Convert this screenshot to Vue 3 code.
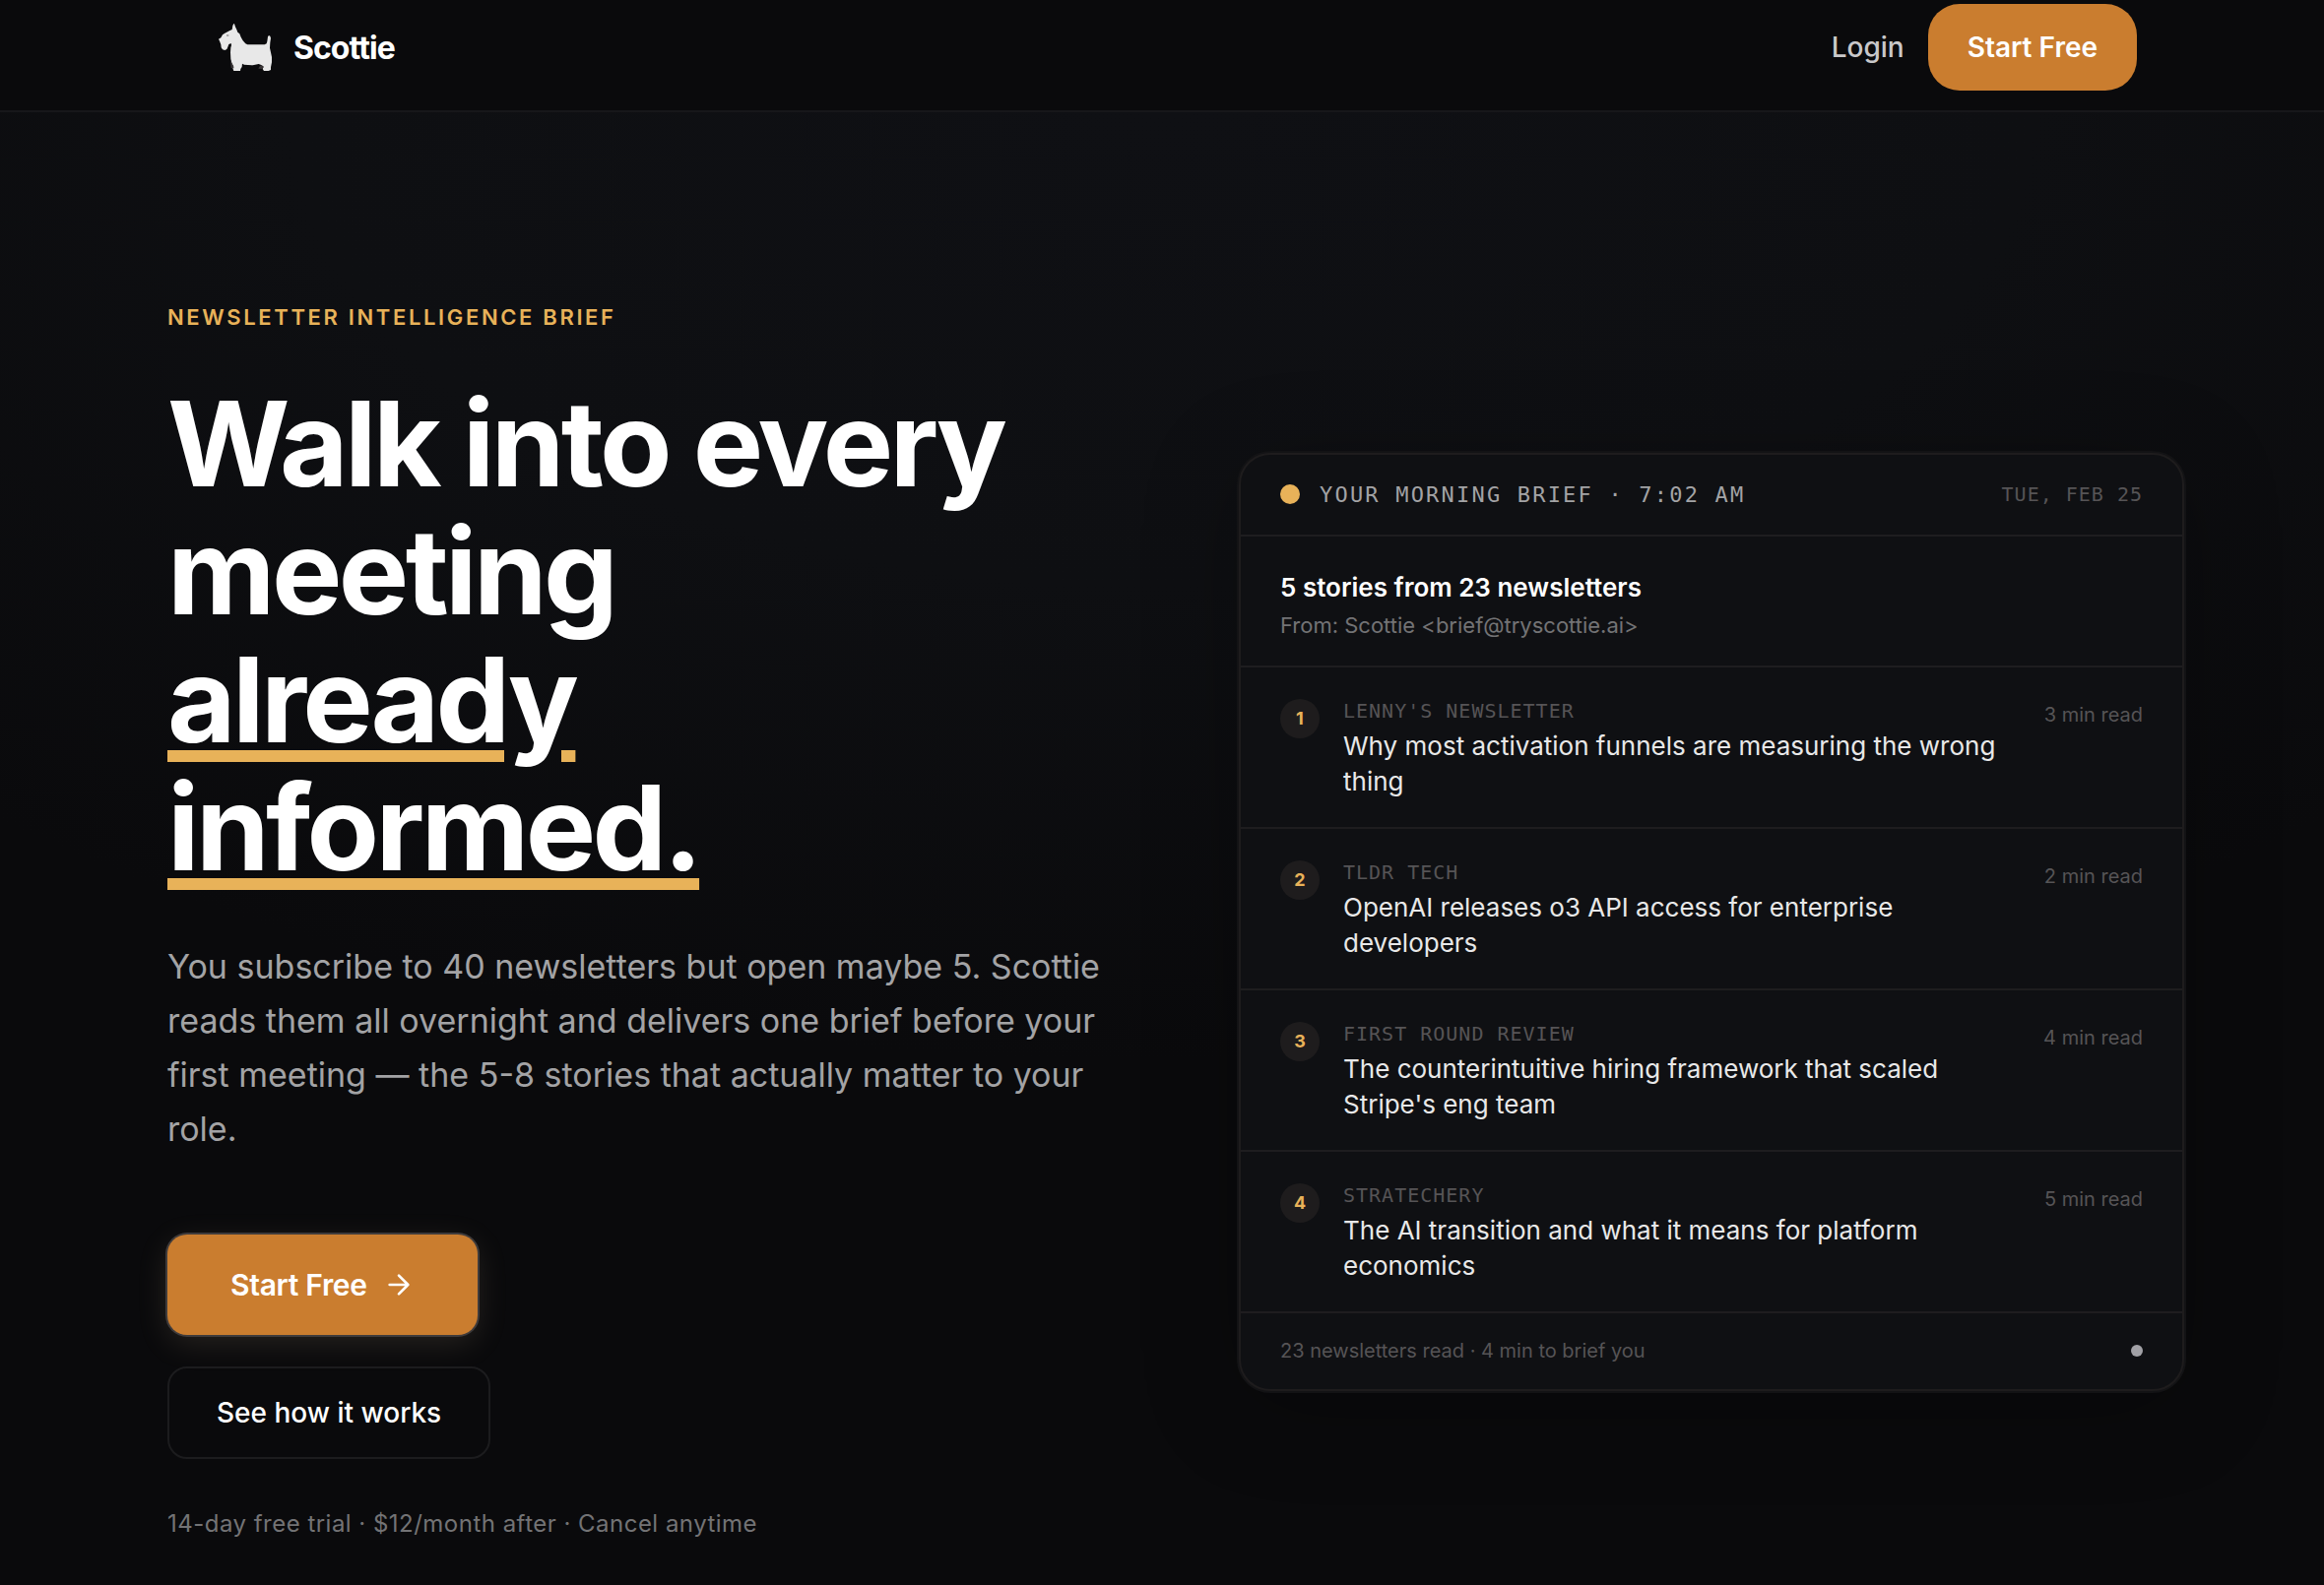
<template>
  <div class="page">
    <header class="nav">
      <div class="nav-inner">
        <a class="brand" href="#">
          <svg class="brand-logo" viewBox="66 72 162 144" aria-hidden="true">
            <path
              fill="#e8e8e8"
              d="M112 72 L114 73 L117 82 L121 90 L124 98 L130 103 L134 113 L140 124 L148 133 L154 136 L206 136 L212 133 L214 126 L216 112 L219 108 L223 110 L225 116 L223 130 L222 146 L225 160 L228 174 L228 190 L225 205 L225 213 L218 216 L204 216 L200 210 L203 203 L196 198 L188 195 L170 199 L144 197 L138 194 L137 204 L133 210 L132 216 L112 216 L109 208 L111 202 L106 192 L103 180 L102 160 L103 145 L105 138 L104 132 L97 135 L94 143 L91 150 L85 153 L78 151 L74 145 L73 136 L69 125 L66 119 L73 115 L78 106 L85 101 L99 94 L107 90 L109 78 Z"
            />
            <path fill="#3a3637" d="M102 182 L106 192 L112 203 L112 208 L104 207 Z M196 198 L203 203 L200 210 L187 209 L190 203 Z" />
            <rect x="90" y="105" width="7" height="6" fill="#aaa9aa" />
          </svg>
          <span class="brand-name">Scottie</span>
        </a>
        <nav class="nav-actions">
          <a class="nav-login" href="#login">Login</a>
          <a class="nav-cta" href="#start">Start Free</a>
        </nav>
      </div>
    </header>

    <main class="hero">
      <section class="hero-copy">
        <p class="eyebrow">Newsletter Intelligence Brief</p>
        <h1 class="headline">
          Walk into every<br />meeting<br /><span class="underlined">already<br />informed.</span>
        </h1>
        <p class="lead">
          You subscribe to 40 newsletters but open maybe 5. Scottie reads them all overnight and
          delivers one brief before your first meeting — the 5-8 stories that actually matter to
          your role.
        </p>
        <div class="cta-group">
          <a class="btn btn-primary" href="#start">
            Start Free
            <svg class="arrow" viewBox="0 0 24 24" aria-hidden="true">
              <path d="M5 12h14M12 5l7 7-7 7" />
            </svg>
          </a>
          <a class="btn btn-secondary" href="#how">See how it works</a>
        </div>
        <p class="terms">14-day free trial · $12/month after · Cancel anytime</p>
      </section>

      <section class="brief">
        <div class="brief-bar">
          <span class="dot dot-live"></span>
          <span class="brief-title">Your morning brief · 7:02 AM</span>
          <span class="brief-date">Tue, Feb 25</span>
        </div>
        <div class="brief-subject">
          <h2>5 stories from 23 newsletters</h2>
          <p>From: Scottie &lt;brief@tryscottie.ai&gt;</p>
        </div>
        <ol class="stories">
          <li v-for="(story, index) in stories" :key="story.source" class="story">
            <span class="story-number">{{ index + 1 }}</span>
            <div class="story-body">
              <div class="story-source">{{ story.source }}</div>
              <div class="story-title">{{ story.title }}</div>
            </div>
            <span class="story-time">{{ story.minutes }} min read</span>
          </li>
        </ol>
        <div class="brief-footer">
          <span>23 newsletters read · 4 min to brief you</span>
          <span class="dot dot-idle"></span>
        </div>
      </section>
    </main>
  </div>
</template>

<script setup>
const stories = [
  {
    source: "Lenny's Newsletter",
    title: 'Why most activation funnels are measuring the wrong thing',
    minutes: 3
  },
  {
    source: 'TLDR Tech',
    title: 'OpenAI releases o3 API access for enterprise developers',
    minutes: 2
  },
  {
    source: 'First Round Review',
    title: "The counterintuitive hiring framework that scaled Stripe's eng team",
    minutes: 4
  },
  {
    source: 'Stratechery',
    title: 'The AI transition and what it means for platform economics',
    minutes: 5
  }
]
</script>

<style>
body {
  margin: 0;
  background: #0a0a0c;
}
</style>

<style scoped>
.page {
  min-height: 100vh;
  box-sizing: border-box;
  overflow: hidden;
  background: radial-gradient(ellipse 75% 60% at 50% 7%, #0f1014 0%, #0e0f12 50%, #0a0a0c 100%), #0a0a0c;
  color: #fff;
  font-family: Inter, 'Liberation Sans', sans-serif;
}

h1, h2, p, ol {
  margin: 0;
  padding: 0;
}

a {
  color: inherit;
  text-decoration: none;
}

/* top bar */
.nav {
  background: #0a0a0c;
  border-bottom: 2px solid #17171a;
}
.nav-inner {
  display: flex;
  justify-content: space-between;
  align-items: center;
  padding: 4px 190px 20px 222px;
}
.brand {
  display: flex;
  align-items: center;
  gap: 22px;
}
.brand-logo {
  width: 54px;
  height: 48px;
}
.brand-name {
  font-size: 32px;
  font-weight: 700;
  letter-spacing: -0.03em;
}
.nav-actions {
  display: flex;
  align-items: center;
  gap: 24px;
}
.nav-login {
  color: #c9c8ca;
  font-size: 28px;
  font-weight: 500;
}
.nav-cta {
  padding: 0 40px;
  border-radius: 32px;
  background: #ca7d2f;
  font-size: 28px;
  font-weight: 600;
  line-height: 88px;
}

/* hero */
.hero {
  display: grid;
  grid-template-columns: minmax(0, 1fr) minmax(0, 1fr);
  gap: 128px;
  align-items: center;
  padding: 192px 142px 44px 170px;
}
.eyebrow {
  color: #e8b259;
  font-size: 22px;
  font-weight: 600;
  line-height: 32px;
  letter-spacing: 0.12em;
  text-transform: uppercase;
}
.headline {
  margin-top: 48px;
  font-size: 120px;
  font-weight: 700;
  line-height: 130px;
  letter-spacing: -0.03em;
}
.underlined {
  text-decoration: underline;
  text-decoration-color: #e8b259;
  text-decoration-thickness: 12px;
  text-underline-offset: 8px;
}
.lead {
  margin-top: 48px;
  color: #a3a3a5;
  font-size: 34px;
  line-height: 55px;
}
.cta-group {
  display: flex;
  flex-direction: column;
  align-items: flex-start;
  gap: 32px;
  margin-top: 80px;
}
.btn {
  display: inline-flex;
  align-items: center;
  border-radius: 20px;
}
.btn-primary {
  gap: 16px;
  padding: 0 64px;
  background: #ca7d2f;
  box-shadow: 0 0 0 2px #3f3b3b, 0 8px 32px rgba(220, 190, 150, 0.14);
  font-size: 30px;
  font-weight: 600;
  line-height: 102px;
  letter-spacing: -0.01em;
}
.arrow {
  width: 32px;
  height: 32px;
  fill: none;
  stroke: #fff;
  stroke-width: 2;
  stroke-linecap: round;
  stroke-linejoin: round;
}
.btn-secondary {
  padding: 0 48px;
  border: 2px solid #1c1c1e;
  font-size: 28px;
  font-weight: 500;
  line-height: 90px;
}
.terms {
  margin-top: 48px;
  color: #737375;
  font-size: 24px;
  line-height: 36px;
  letter-spacing: 0.02em;
}

/* sample email card */
.brief {
  overflow: hidden;
  border: 2px solid #1e1c1d;
  border-radius: 32px;
  background: #0f1013;
  box-shadow: 0 0 0 2px #131315, 0 16px 96px rgba(0, 0, 0, 0.25);
}
.brief-bar {
  display: flex;
  align-items: center;
  gap: 20px;
  padding: 24px 40px;
  border-bottom: 2px solid #1e1d1f;
  font-family: 'DejaVu Sans Mono', 'Liberation Mono', monospace;
  line-height: 33px;
  text-transform: uppercase;
}
.dot {
  flex: none;
  border-radius: 50%;
}
.dot-live {
  width: 20px;
  height: 20px;
  background: #e8b259;
}
.brief-title {
  color: #a3a3a5;
  font-size: 22px;
  letter-spacing: 0.1em;
}
.brief-date {
  margin-left: auto;
  color: #565456;
  font-size: 20px;
  letter-spacing: 0.05em;
}
.brief-subject {
  padding: 32px 40px 23px;
  border-bottom: 2px solid #1e1d1f;
}
.brief-subject h2 {
  font-size: 26px;
  font-weight: 600;
  line-height: 40px;
}
.brief-subject p {
  color: #737375;
  font-size: 22px;
  line-height: 36px;
}
.stories {
  list-style: none;
}
.story {
  display: flex;
  align-items: flex-start;
  gap: 24px;
  padding: 32px 40px 28px;
  border-bottom: 2px solid #1e1d1f;
}
.story-number {
  flex: none;
  width: 40px;
  border-radius: 50%;
  background: #1e1c1d;
  color: #e8b259;
  font-size: 18px;
  font-weight: 700;
  line-height: 40px;
  text-align: center;
}
.story-body {
  flex: 1;
}
.story-source {
  color: #565456;
  font-family: 'DejaVu Sans Mono', 'Liberation Mono', monospace;
  font-size: 20px;
  line-height: 24px;
  letter-spacing: 0.05em;
  text-transform: uppercase;
}
.story-title {
  margin-top: 6px;
  color: #e8e8e8;
  font-size: 26px;
  line-height: 36px;
}
.story-time {
  flex: none;
  color: #565456;
  font-size: 20px;
  line-height: 32px;
}
.brief-footer {
  display: flex;
  justify-content: space-between;
  align-items: center;
  padding: 24px 40px;
  color: #565456;
  font-size: 20px;
  line-height: 29px;
}
.dot-idle {
  width: 12px;
  height: 12px;
  background: #a1a1a6;
}
</style>
